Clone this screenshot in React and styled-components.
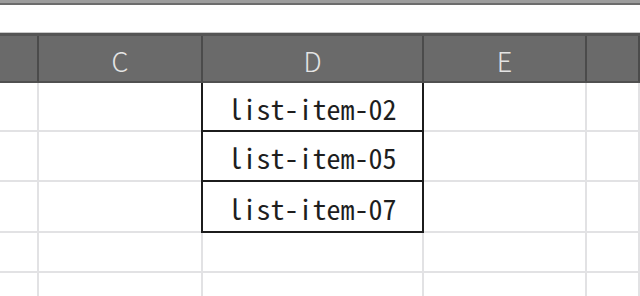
import React from 'react';
import styled, { createGlobalStyle } from 'styled-components';

const GlobalStyle = createGlobalStyle`
  html, body {
    margin: 0;
    padding: 0;
    background: #ffffff;
    overflow: hidden;
  }
`;

const columns = ['B', 'C', 'D', 'E', 'F'];
const headerLabels = { C: 'C', D: 'D', E: 'E' };

const rows = [
  { height: 49, value: 'list-item-02' },
  { height: 50, value: 'list-item-05' },
  { height: 51, value: 'list-item-07' },
  { height: 40 },
  { height: 40 },
];

function App() {
  return (
    <Page>
      <GlobalStyle />
      <TopBand />
      <FormulaBar />
      <Sheet>
        <HeaderTop />
        <Grid>
          {columns.map((col) => (
            <HeaderCell key={col}>{headerLabels[col] || ''}</HeaderCell>
          ))}
          {rows.map((row, r) =>
            columns.map((col) => {
              const boxed = col === 'D' && row.value;
              return (
                <Cell
                  key={`${r}-${col}`}
                  $height={row.height}
                  $boxed={boxed}
                >
                  {boxed ? row.value : ''}
                </Cell>
              );
            })
          )}
        </Grid>
      </Sheet>
    </Page>
  );
}

const Page = styled.div`
  width: 640px;
  height: 296px;
  overflow: hidden;
  display: flex;
  flex-direction: column;

  & > * {
    flex-shrink: 0;
  }
`;

const TopBand = styled.div`
  height: 3px;
  background: #9c9c9c;
  border-bottom: 2px solid #6c6c6c;
`;

const FormulaBar = styled.div`
  height: 27px;
  background: #ffffff;
  border-bottom: 1px solid #c9c9c9;
`;

const Sheet = styled.div`
  display: flex;
  flex-direction: column;
`;

const HeaderTop = styled.div`
  height: 3px;
  background: #555555;
`;

const Grid = styled.div`
  display: grid;
  grid-template-columns: 39px 164px 221px 163px 1fr;
  grid-auto-rows: auto;
`;

const HeaderCell = styled.div`
  box-sizing: border-box;
  height: 47px;
  background: #6a6a6a;
  border-right: 2px solid #4b4b4b;
  border-bottom: 2px solid #505050;
  display: flex;
  align-items: flex-end;
  justify-content: center;
  padding-bottom: 7px;
  color: #e4e4e4;
  font-family: "Noto Sans CJK JP", "DejaVu Sans", sans-serif;
  font-weight: 300;
  font-size: 27px;
  line-height: 1;

  &:last-child {
    border-right: none;
  }
`;

const Cell = styled.div`
  box-sizing: border-box;
  height: ${(p) => p.$height}px;
  border-right: 2px solid ${(p) => (p.$boxed ? '#1c1c1c' : '#e2e2e4')};
  border-bottom: 2px solid ${(p) => (p.$boxed ? '#1c1c1c' : '#e2e2e4')};
  box-shadow: ${(p) => (p.$boxed ? '-2px 0 0 #1c1c1c' : 'none')};
  display: flex;
  align-items: center;
  justify-content: center;
  padding-top: 2px;
  color: #1e1e1e;
  font-family: "Noto Sans CJK JP", "DejaVu Sans Mono", monospace;
  font-feature-settings: "hwid" 1;
  font-weight: 400;
  font-size: 28px;
  line-height: 1;
  white-space: nowrap;
`;

export default App;
